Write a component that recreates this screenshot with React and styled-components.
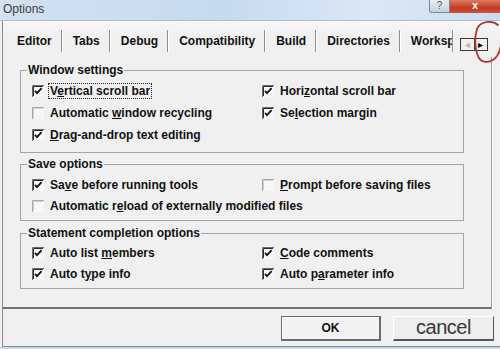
import styled, { createGlobalStyle } from "styled-components";

const GlobalStyle = createGlobalStyle`
  html, body {
    margin: 0;
    padding: 0;
  }
  body {
    width: 500px;
    height: 349px;
    overflow: hidden;
    background: #f0f0f0;
    font-family: "Liberation Sans", Arial, sans-serif;
    color: #111;
  }
`;

const tabs = ["Editor", "Tabs", "Debug", "Compatibility", "Build", "Directories", "Workspace"];

const groups = [
    {
        title: "Window settings",
        rowHeight: 22,
        pad: "3px 0 6px 11px",
        gap: 0,
        items: [
            { label: ["V", "e", "rtical scroll bar"], checked: true, focus: true },
            { label: ["Hori", "z", "ontal scroll bar"], checked: true },
            { label: ["Automatic ", "w", "indow recycling"], checked: false },
            { label: ["Se", "l", "ection margin"], checked: true },
            { label: ["", "D", "rag-and-drop text editing"], checked: true }
        ]
    },
    {
        title: "Save options",
        rowHeight: 21,
        pad: "3px 0 4px 11px",
        gap: 4,
        items: [
            { label: ["Sa", "v", "e before running tools"], checked: true },
            { label: ["", "P", "rompt before saving files"], checked: false },
            { label: ["Automatic r", "e", "load of externally modified files"], checked: false, wide: true }
        ]
    },
    {
        title: "Statement completion options",
        rowHeight: 21,
        pad: "2px 0 4px 11px",
        gap: 5,
        items: [
            { label: ["Auto list ", "m", "embers"], checked: true },
            { label: ["", "C", "ode comments"], checked: true },
            { label: ["Auto t", "y", "pe info"], checked: true },
            { label: ["Auto p", "a", "rameter info"], checked: true }
        ]
    }
];

function CheckBox({ checked }) {
    return (
        <svg width="12" height="12" viewBox="0 0 12 12">
            <rect x="0" y="0" width="12" height="12" fill="#f7f7f7" />
            <path d="M0.5 12 V0.5 H12" fill="none" stroke={checked ? "#6a6a6a" : "#a8a8a8"} />
            <path d="M1.5 11 V1.5 H11" fill="none" stroke={checked ? "#2a2a2a" : "#cfcfcf"} />
            {checked && (
                <path d="M3 5.8 L5 8.2 L9.6 3.2" fill="none" stroke="#111" strokeWidth="1.8" />
            )}
        </svg>
    );
}

function App() {
    return (
        <>
            <GlobalStyle />
            <Frame>
                <TitleBar>
                    <TitleText>Options</TitleText>
                    <WindowButtons>
                        <HelpButton>?</HelpButton>
                        <CloseButton>x</CloseButton>
                    </WindowButtons>
                </TitleBar>
                <Window>
                    <TabRow>
                        <TabList>
                            {tabs.map((t, i) => (
                                <TabItem key={t}>
                                    <Tab>{t}</Tab>
                                    {i < tabs.length - 1 && <Separator />}
                                </TabItem>
                            ))}
                        </TabList>
                        <Separator />
                        <ArrowBox>
                            <ArrowHalf $disabled>&#9666;</ArrowHalf>
                            <ArrowHalf>&#9656;</ArrowHalf>
                        </ArrowBox>
                    </TabRow>
                    <Panel>
                        {groups.map(g => (
                            <Group key={g.title} $pad={g.pad} $gap={g.gap}>
                                <Legend>{g.title}</Legend>
                                <Grid $rowHeight={g.rowHeight}>
                                    {g.items.map(item => (
                                        <Row key={item.label.join("")} $wide={item.wide}>
                                            <CheckBox checked={item.checked} />
                                            <Label $focus={item.focus}>
                                                {item.label[0]}
                                                <Key>{item.label[1]}</Key>
                                                {item.label[2]}
                                            </Label>
                                        </Row>
                                    ))}
                                </Grid>
                            </Group>
                        ))}
                    </Panel>
                    <Footer>
                        <OkButton>OK</OkButton>
                        <CancelButton>cancel</CancelButton>
                    </Footer>
                </Window>
                <BottomStrip />
                <Scribble width="34" height="46" viewBox="0 0 34 46">
                    <path
                        d="M30 6 C24 1, 12 2, 9 10 C6 19, 7 32, 11 39 C15 45, 24 44, 29 37 C33 31, 34 22, 33 14"
                        fill="none"
                        stroke="#b0342e"
                        strokeWidth="1.8"
                        strokeLinecap="round"
                    />
                </Scribble>
            </Frame>
        </>
    );
}

const Frame = styled.div`
    position: relative;
    width: 500px;
    height: 349px;
    display: flex;
    flex-direction: column;
    overflow: hidden;
`;

const TitleBar = styled.div`
    height: 20px;
    display: flex;
    justify-content: space-between;
    align-items: flex-start;
    padding-left: 3px;
    background: linear-gradient(90deg, #d3e1f0 0%, #c7daee 45%, #dbe8f6 75%, #c9dcef 100%);
    border-bottom: 1px solid #aebfd2;
`;

const TitleText = styled.span`
    font-size: 12px;
    line-height: 18px;
    color: #3c3c3c;
`;

const WindowButtons = styled.div`
    display: flex;
`;

const HelpButton = styled.div`
    width: 19px;
    height: 12px;
    border: 1px solid #7d8896;
    border-top: none;
    border-bottom-left-radius: 3px;
    background: linear-gradient(#e9eef4, #c6d0dc);
    color: #555;
    font-size: 10px;
    line-height: 11px;
    text-align: center;
`;

const CloseButton = styled.div`
    width: 50px;
    height: 13px;
    background: linear-gradient(#de7a64, #c23a25 60%, #cf4f37);
    color: #fff;
    font-weight: bold;
    font-size: 11px;
    line-height: 11px;
    text-align: center;
`;

const Window = styled.div`
    flex: 1;
    margin-left: 2px;
    border-left: 1px solid #8a8a8a;
    border-bottom: 1px solid #7d8a98;
    display: flex;
    flex-direction: column;
    background: #f0f0f0;
`;

const TabRow = styled.div`
    height: 36px;
    box-sizing: border-box;
    padding: 4px 0 0 4px;
    display: flex;
    align-items: center;
    background: linear-gradient(#f7f7f7, #f0f0f0 40%);
`;

const TabList = styled.div`
    width: 445px;
    flex: none;
    display: flex;
    align-items: center;
    overflow: hidden;
    white-space: nowrap;
`;

const TabItem = styled.div`
    display: flex;
    align-items: center;
    flex: none;
`;

const Tab = styled.span`
    padding: 0 9px 0 10px;
    font-size: 12px;
    font-weight: bold;
    line-height: 16px;
    color: #111;
`;

const Separator = styled.span`
    width: 1px;
    height: 22px;
    flex: none;
    background: #8f8f8f;
    border-right: 1px solid #fff;
`;

const ArrowBox = styled.div`
    margin: 6px 0 0 6px;
    width: 28px;
    height: 13px;
    box-sizing: border-box;
    border: 1px solid #3a3a3a;
    display: flex;
`;

const ArrowHalf = styled.span`
    flex: 1;
    font-size: 10px;
    line-height: 11px;
    text-align: center;
    color: ${p => (p.$disabled ? "#b5b5b5" : "#000")};
    border-left: ${p => (p.$disabled ? "none" : "1px solid #3a3a3a")};
`;

const Panel = styled.div`
    height: 252px;
    box-sizing: border-box;
    margin-right: 8px;
    padding: 6px 27px 0 17px;
    border-right: 1px solid #9c9c9c;
    border-bottom: 2px solid #727272;
    box-shadow: 1px 0 0 #fff;
    display: flex;
    flex-direction: column;
`;

const Group = styled.fieldset`
    margin: ${p => p.$gap}px 0 0 0;
    padding: ${p => p.$pad};
    border: 1px solid #a4a4a4;
    min-width: 0;
`;

const Legend = styled.legend`
    margin-left: -5px;
    padding: 0 1px;
    font-size: 12px;
    font-weight: bold;
    line-height: 14px;
`;

const Grid = styled.div`
    display: grid;
    grid-template-columns: 230px 1fr;
    grid-auto-rows: ${p => p.$rowHeight}px;
`;

const Row = styled.div`
    display: flex;
    align-items: center;
    gap: 5px;
    grid-column: ${p => (p.$wide ? "1 / -1" : "auto")};
`;

const Label = styled.span`
    font-size: 12px;
    font-weight: bold;
    line-height: 14px;
    padding: 0 1px;
    margin-left: -1px;
    border: 1px dotted ${p => (p.$focus ? "#222" : "transparent")};
`;

const Key = styled.span`
    text-decoration: underline;
`;

const Footer = styled.div`
    flex: 1;
    display: flex;
    justify-content: flex-end;
    align-items: flex-start;
    gap: 12px;
    padding: 7px 6px 0 0;
`;

const OkButton = styled.div`
    width: 100px;
    height: 25px;
    box-sizing: border-box;
    border: 1px solid #6b6b6b;
    border-right-width: 2px;
    border-bottom-width: 2px;
    background: #f3f3f3;
    box-shadow: inset 1px 1px 0 #fff;
    font-size: 12px;
    font-weight: bold;
    line-height: 22px;
    text-align: center;
`;

const CancelButton = styled.div`
    width: 101px;
    height: 25px;
    box-sizing: border-box;
    border-top: 1px solid #fff;
    border-left: 1px solid #fff;
    border-right: 1px solid #555;
    border-bottom: 2px solid #555;
    background: #eeeeee;
    font-size: 20px;
    line-height: 20px;
    color: #383838;
    text-align: center;
    letter-spacing: -0.5px;
`;

const BottomStrip = styled.div`
    height: 2px;
    background: #c9d6ea;
`;

const Scribble = styled.svg`
    position: absolute;
    left: 468px;
    top: 19px;
`;

export default App;
